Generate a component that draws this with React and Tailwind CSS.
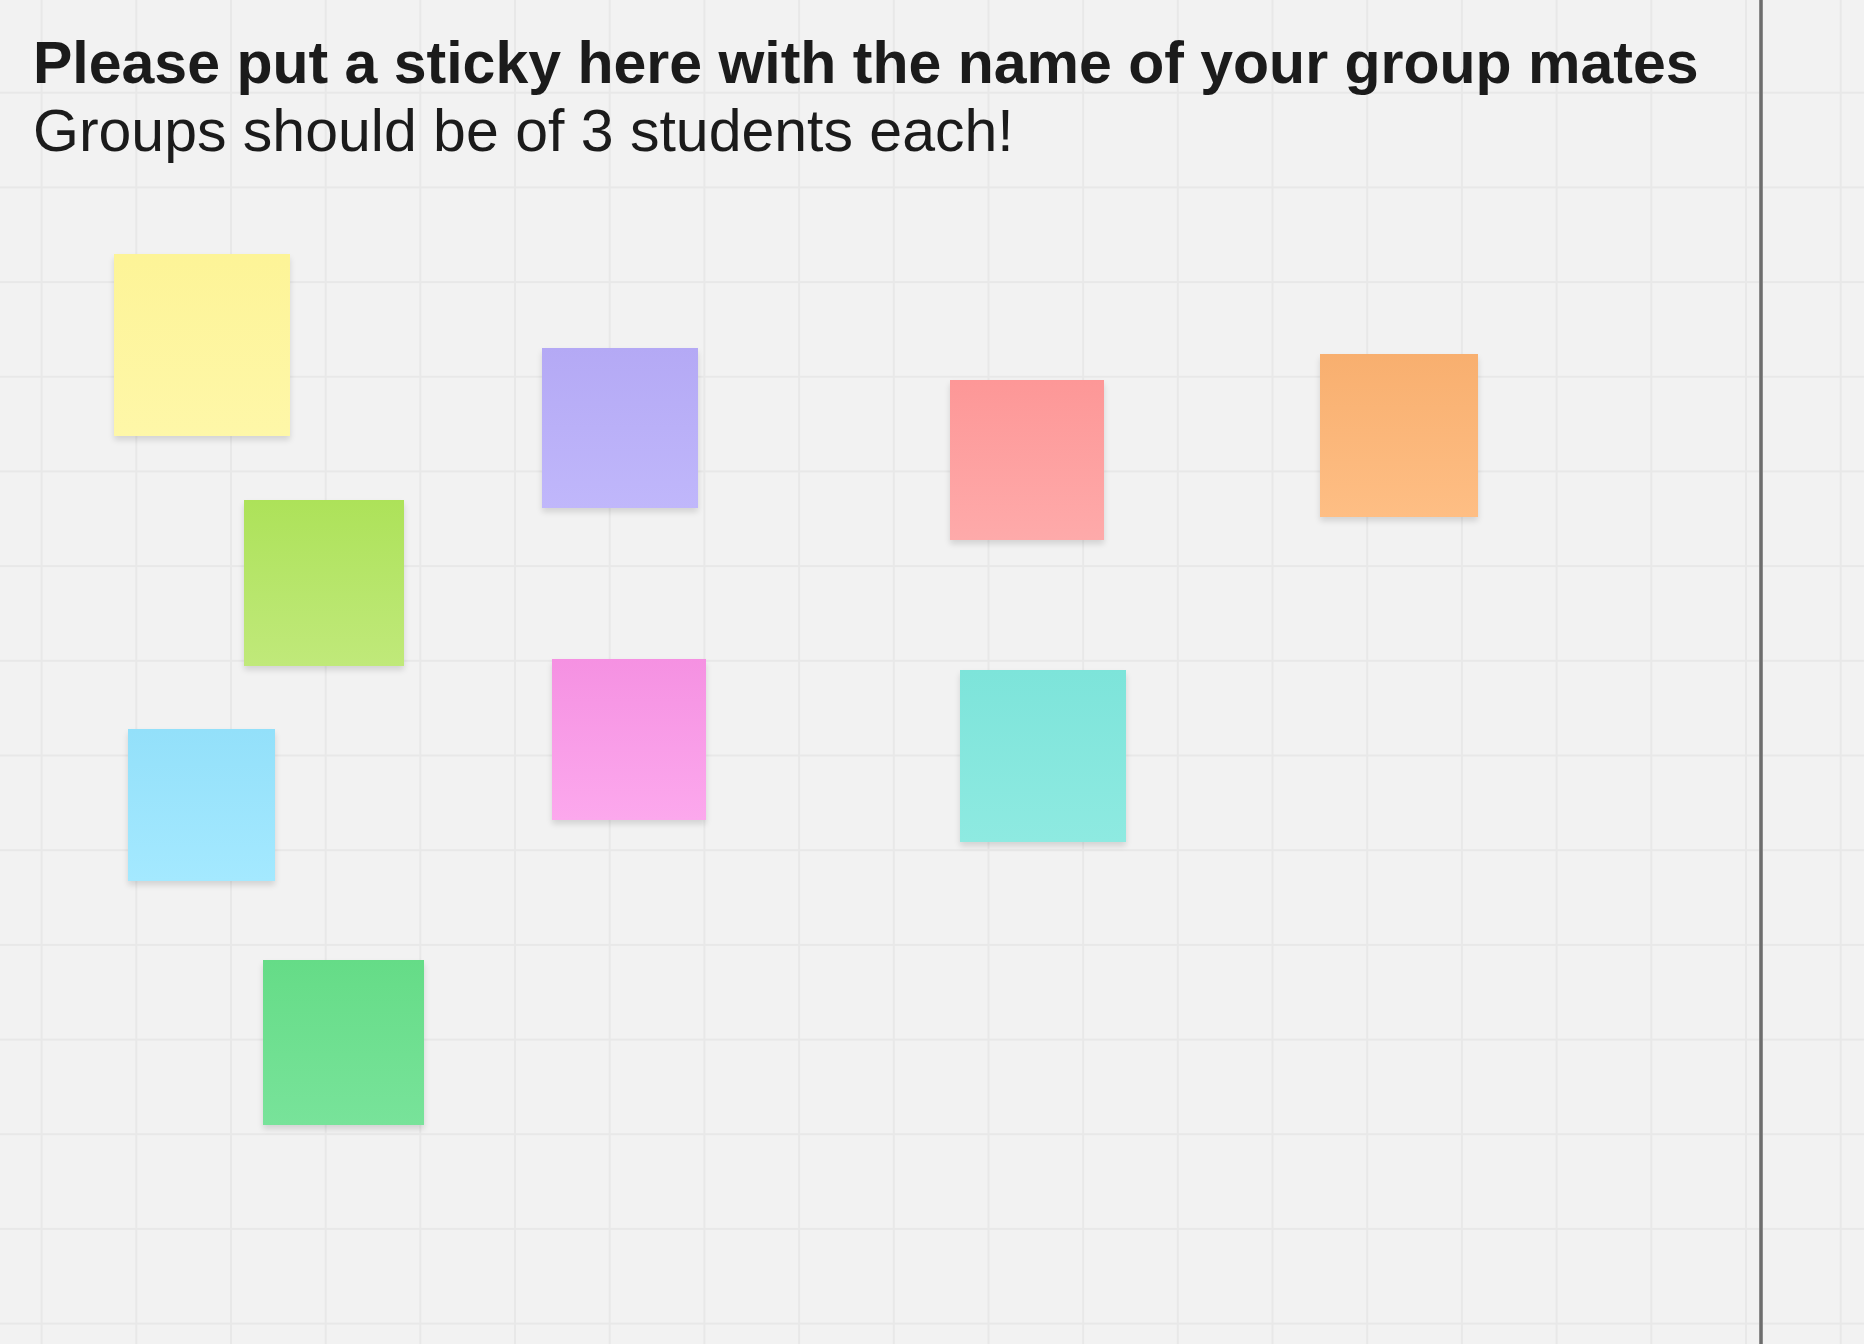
import React from "react";

const notes = [
  { left: 114, top: 254, w: 176, h: 182, cls: "from-[#fdf497] to-[#fef7a8]" },
  { left: 542, top: 348, w: 156, h: 160, cls: "from-[#b4a9f5] to-[#c0b7fb]" },
  { left: 950, top: 380, w: 154, h: 160, cls: "from-[#fd9797] to-[#feaaaa]" },
  { left: 1320, top: 354, w: 158, h: 163, cls: "from-[#f8af6f] to-[#febe84]" },
  { left: 244, top: 500, w: 160, h: 166, cls: "from-[#ade259] to-[#c0e97a]" },
  { left: 552, top: 659, w: 154, h: 161, cls: "from-[#f591e2] to-[#fca8ed]" },
  { left: 960, top: 670, w: 166, h: 172, cls: "from-[#7de4da] to-[#8eeae1]" },
  { left: 128, top: 729, w: 147, h: 152, cls: "from-[#93e0fa] to-[#a4e9ff]" },
  { left: 263, top: 960, w: 161, h: 165, cls: "from-[#65dc87] to-[#78e39a]" },
];

export default function App() {
  return (
    <div className="flex h-[1344px] w-full overflow-hidden bg-[#f2f2f2] bg-[linear-gradient(to_right,#e8e8e8_2px,transparent_2px),linear-gradient(to_bottom,#e8e8e8_2px,transparent_2px)] bg-[size:94.7px_94.7px] bg-[position:40.6px_91.7px] font-['Liberation_Sans',Arial,sans-serif] text-[#1b1b1b]">
      <div className="relative w-[1759px] shrink-0">
        <div className="pl-[33px] pt-[29px]">
          <h1 className="text-[59px] font-bold leading-[68px] whitespace-nowrap">
            Please put a sticky here with the name of your group mates
          </h1>
          <p className="text-[59px] leading-[68px] whitespace-nowrap">
            Groups should be of 3 students each!
          </p>
        </div>
        {notes.map((n, i) => (
          <div
            key={i}
            className={`absolute bg-linear-to-b ${n.cls} shadow-[0_4px_6px_rgba(0,0,0,0.13)]`}
            style={{ left: n.left, top: n.top, width: n.w, height: n.h }}
          />
        ))}
      </div>
      <div className="w-[4px] shrink-0 bg-[linear-gradient(to_right,#9a9a9a,#5e5e5e,#9a9a9a)]" />
      <div className="flex-1" />
    </div>
  );
}
